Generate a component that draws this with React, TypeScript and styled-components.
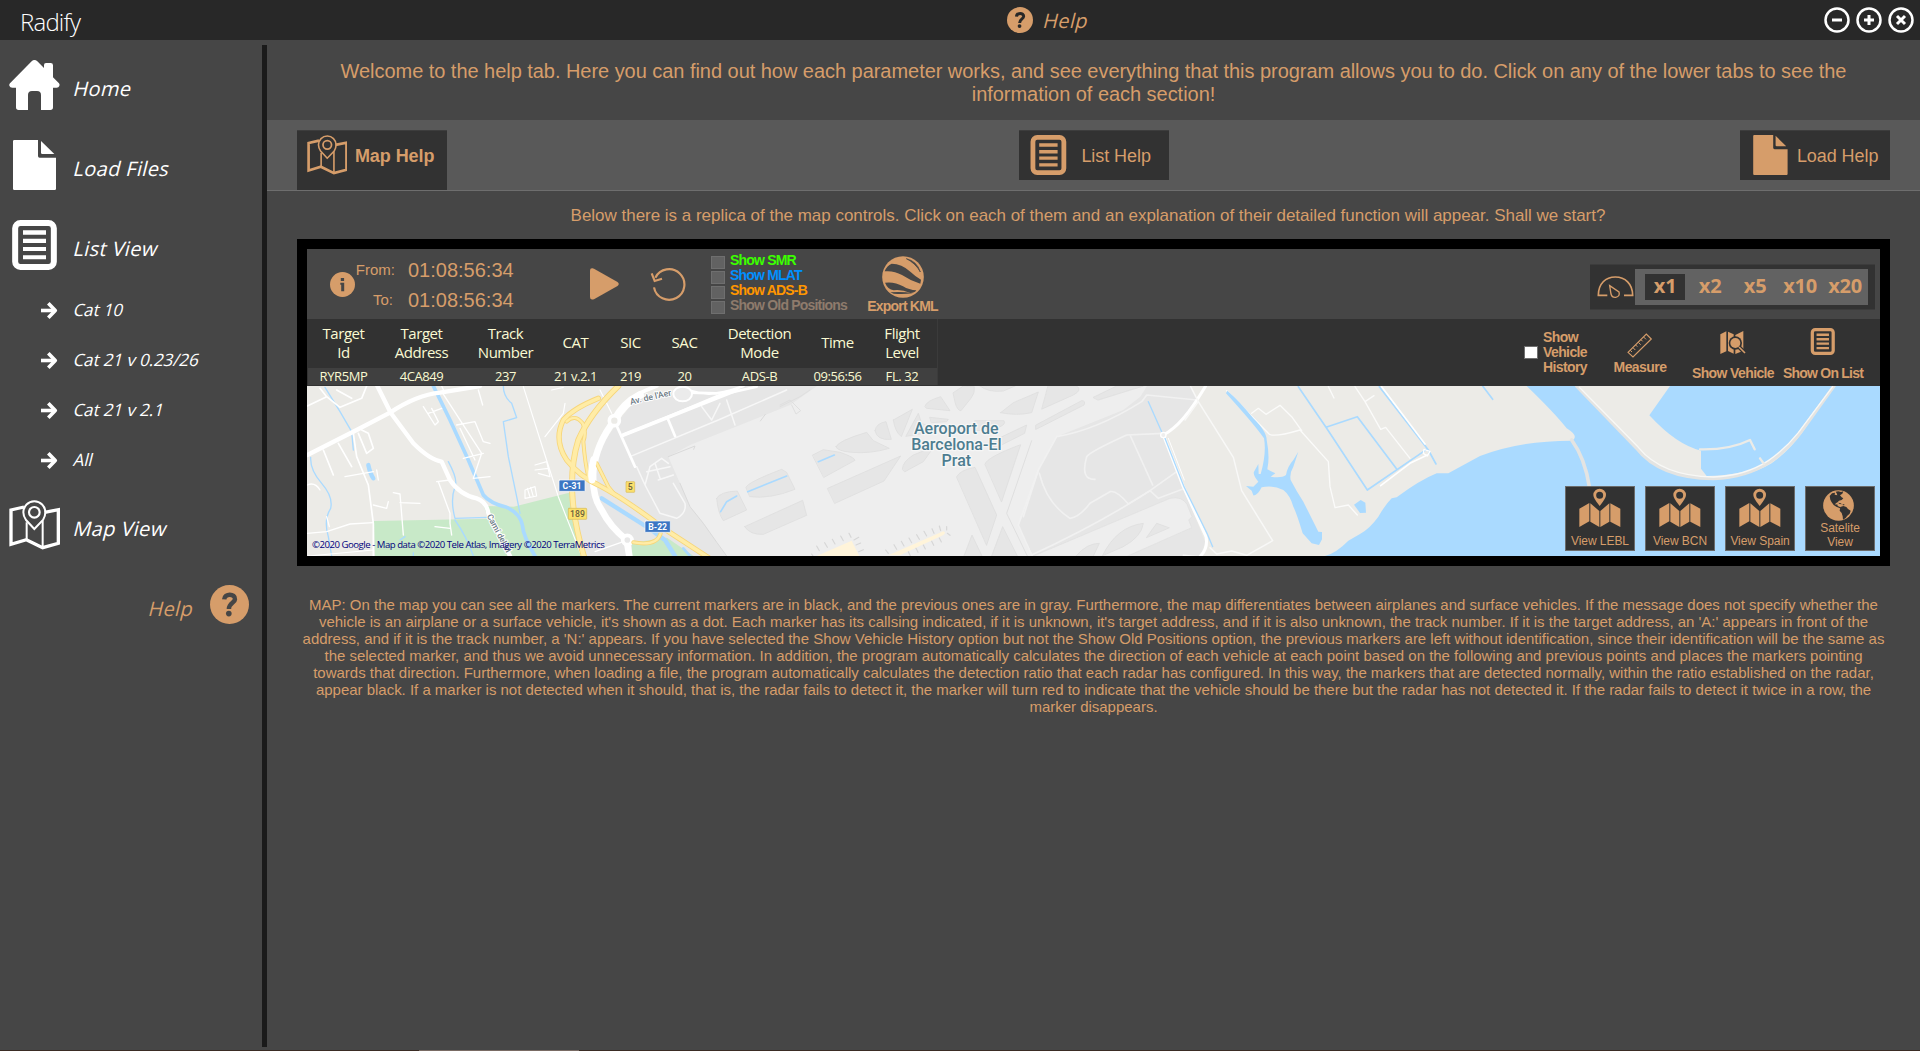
import React from "react";
import styled, { createGlobalStyle, css } from "styled-components";

const tan = "#d69d6a";
const arial = '"Liberation Sans", Arial, sans-serif';
const segoe = '"Open Sans", "Noto Sans", sans-serif';

const GlobalStyle = createGlobalStyle`
  *, *::before, *::after { box-sizing: border-box; }
  body { margin: 0; background: #464646; overflow: hidden; }
  svg { display: block; flex: none; }
`;

/* ---------- window ---------- */

const Window = styled.div`
  display: flex;
  flex-direction: column;
  width: 1920px;
  height: 1051px;
  background: #464646;
  color: ${tan};
  font-family: ${arial};
`;

const TitleBar = styled.header`
  display: grid;
  grid-template-columns: 987px auto 1fr;
  align-items: center;
  height: 40px;
  padding: 0 6px 0 20px;
  background: #282828;
`;

const AppName = styled.div`
  font: 300 24px/32px ${segoe};
  letter-spacing: -0.8px;
  color: #fff;
  padding-top: 3px;
`;

const TitleCenter = styled.div`
  display: flex;
  align-items: center;
  gap: 11px;
`;

const WindowButtons = styled.div`
  display: flex;
  justify-content: flex-end;
  gap: 6px;
`;

const Slanted = styled.span<{ $size?: number; $top?: number; $spread?: number }>`
  display: inline-block;
  font: 400 ${(p) => p.$size ?? 20}px/28px ${segoe};
  letter-spacing: ${(p) => p.$spread ?? 0.35}px;
  transform: skewX(-14deg);
  padding-top: ${(p) => p.$top ?? 0}px;
  white-space: nowrap;
`;

const Body = styled.div`
  display: flex;
  flex: 1;
  min-height: 0;
`;

const BottomEdge = styled.div`
  display: flex;
  height: 1px;
  padding-left: 419px;
  background: #3a2c24;
  &::after {
    content: "";
    width: 160px;
    background: #796b64;
  }
`;

/* ---------- sidebar ---------- */

const Sidebar = styled.nav`
  display: flex;
  flex-direction: column;
  width: 262px;
  padding-top: 20px;
  color: #fff;
`;

const NavItem = styled.a`
  display: flex;
  align-items: center;
  height: 50px;
  margin-bottom: 30px;
  padding-left: 9px;
  gap: 15px;
`;

const SubNav = styled.div`
  margin: -15px 0 15px;
`;

const SubItem = styled.a`
  display: flex;
  align-items: center;
  height: 50px;
  padding-left: 41px;
  gap: 16px;
`;

const HelpItem = styled.a`
  display: flex;
  align-items: center;
  justify-content: flex-end;
  gap: 15px;
  margin-top: 5px;
  padding-right: 13px;
  color: ${tan};
`;

const Divider = styled.div`
  width: 5px;
  margin: 5px 0 3px;
  background: #1a1a1a;
`;

/* ---------- content ---------- */

const Content = styled.main`
  flex: 1;
  display: flex;
  flex-direction: column;
`;

const Welcome = styled.p`
  margin: 0;
  height: 80px;
  padding-top: 20px;
  font-size: 20px;
  line-height: 23px;
  letter-spacing: -0.04px;
  text-align: center;
`;

const TabStrip = styled.div`
  display: flex;
  justify-content: space-between;
  align-items: flex-start;
  height: 71px;
  padding: 10px 30px 0;
  background: #595959;
  border-bottom: 1px solid #6e6e6e;
`;

const Tab = styled.button<{ $active?: boolean }>`
  display: flex;
  align-items: flex-start;
  width: 150px;
  height: ${(p) => (p.$active ? 60 : 50)}px;
  padding: 5px 5px 0 9.5px;
  border: 0;
  background: #323232;
  color: ${tan};
  font: ${(p) => (p.$active ? "bold" : "normal")} 18px/42px ${arial};
  letter-spacing: -0.06px;
  box-shadow: inset 0 1px #3d3d3d;
  span { flex: 1; text-align: center; white-space: nowrap; }
`;

const Intro = styled.p`
  margin: 0;
  height: 48px;
  padding: 15px 11px 0 0;
  font-size: 17px;
  line-height: 20px;
  letter-spacing: -0.02px;
  text-align: center;
`;

const Replica = styled.section`
  margin: 0 30px;
  border: 10px solid #000;
  height: 327px;
`;

const Toolbar = styled.div`
  display: flex;
  align-items: flex-start;
  height: 70px;
  padding: 0 5px 0 23px;
  background: #464646;
`;

const IconSlot = styled.div<{ $top: number; $left?: number }>`
  margin: ${(p) => p.$top}px 0 0 ${(p) => p.$left ?? 0}px;
`;

const Times = styled.div`
  display: grid;
  grid-template-columns: 40px 104px;
  column-gap: 13px;
  grid-auto-rows: 30px;
  margin-top: 6px;
  line-height: 30px;
  white-space: nowrap;
`;

const TimeLabel = styled.span<{ $inset?: number }>`
  font-size: 15px;
  text-align: right;
  padding-right: ${(p) => p.$inset ?? 0}px;
`;

const TimeValue = styled.span`
  font-size: 20px;
`;

const tinyBold = css`
  font: bold 14px/15px ${arial};
  letter-spacing: -0.8px;
  white-space: nowrap;
`;

const Checks = styled.div`
  margin: 4px 0 0 25px;
  width: 138px;
`;

const CheckRow = styled.label<{ $color: string }>`
  display: flex;
  gap: 5px;
  height: 15px;
  color: ${(p) => p.$color};
  ${tinyBold}
`;

const CheckBox = styled.span<{ $on?: boolean; $top: number }>`
  flex: none;
  width: 14px;
  height: 13px;
  margin-top: ${(p) => p.$top}px;
  border: 1px solid #6f6f6f;
  background: ${(p) => (p.$on ? "#fff" : "#626262")};
`;

const Tool = styled.button<{ $width: number; $top: number; $gap: number; $left?: number; $tight?: number }>`
  display: flex;
  flex-direction: column;
  align-items: center;
  width: ${(p) => p.$width}px;
  gap: ${(p) => p.$gap}px;
  margin: 0 0 0 ${(p) => p.$left ?? 0}px;
  padding: ${(p) => p.$top}px 0 0;
  border: 0;
  background: none;
  color: ${tan};
  ${tinyBold}
  letter-spacing: ${(p) => p.$tight ?? -0.8}px;
`;

const SpeedPanel = styled.div`
  display: flex;
  align-items: center;
  width: 285px;
  height: 46px;
  margin: 15px 0 0 auto;
  padding: 0 10px 0 7px;
  gap: 1px;
  background: #323232;
  border: solid #3c3c3c;
  border-width: 1px 0;
`;

const Speeds = styled.div`
  display: flex;
  align-items: center;
  height: 36px;
  flex: 1;
  padding-left: 8px;
  background: #626262;
`;

const Speed = styled.button<{ $active?: boolean }>`
  width: ${(p) => (p.$active ? 40 : 45)}px;
  margin: 0 ${(p) => (p.$active ? 2.5 : 0)}px;
  height: 26px;
  padding: 0 0 3px;
  border: 0;
  background: ${(p) => (p.$active ? "#323232" : "transparent")};
  color: ${tan};
  font: bold 20px/23px ${segoe};
  letter-spacing: -0.2px;
`;

const InfoBar = styled.div`
  display: flex;
  align-items: flex-start;
  height: 67px;
  padding: 0 12px 0 0.5px;
  background: #323232;
`;

const TargetTable = styled.div`
  display: grid;
  grid-template-columns: 72px 84px 84px 56px 54px 54px 96px 60px 69px;
  grid-template-rows: 49px 17px;
  border-right: 1px solid #3b3b3b;
  color: #fafad2;
  font-family: ${segoe};
  text-align: center;
`;

const HeadCell = styled.div`
  display: flex;
  align-items: center;
  justify-content: center;
  padding-bottom: 2px;
  font-size: 15px;
  line-height: 19px;
  letter-spacing: -0.45px;
  white-space: pre-line;
`;

const DataCell = styled.div`
  background: #404040;
  font-size: 13px;
  line-height: 17px;
  letter-spacing: -0.4px;
`;

const History = styled.label`
  display: flex;
  gap: 5px;
  margin: 11px 22px 0 auto;
  width: 64px;
  ${tinyBold}
  letter-spacing: -0.6px;
  white-space: pre-line;
`;

const MapArea = styled.div`
  position: relative;
  height: 170px;
`;

const MapCredit = styled.div`
  position: absolute;
  left: 5px;
  bottom: 5px;
  font: 9.6px/13px ${segoe};
  letter-spacing: -0.48px;
  color: #00007c;
  white-space: nowrap;
`;

const MapButtons = styled.div`
  position: absolute;
  right: 5px;
  bottom: 5px;
  display: flex;
  gap: 10px;
`;

const MapButton = styled.button`
  display: flex;
  flex-direction: column;
  align-items: center;
  width: 70px;
  height: 65px;
  padding: 1px 0 0;
  border: 1px solid #6b6b6b;
  background: #323232;
  color: ${tan};
  font: 12px/14px ${arial};
  letter-spacing: -0.06px;
  white-space: pre-line;
  span { margin-top: auto; margin-bottom: 2px; }
`;

const Explanation = styled.p`
  margin: 30px 0 0;
  font-size: 15px;
  line-height: 17px;
  letter-spacing: -0.016px;
  text-align: center;
  white-space: pre;
`;

/* ---------- icons ---------- */

const HomeIcon = () => (
  <svg width="51" height="50" viewBox="27 180 153 150" fill="currentColor">
    <path d="M103 180Q108 180 112 184L132 204V195Q132 189 138 189H152Q159 189 159 196V232L177 250Q180 254 178 258Q176 263 170 263H159V322Q159 330 151 330H123V285Q123 273 111 273H96Q84 273 84 285V330H56Q48 330 48 322V263H37Q30 263 28 257Q27 253 30 250L95 184Q99 180 103 180Z" />
  </svg>
);

const FileIcon = ({ size = 50 }: { size?: number }) => (
  <svg width={(size * 51) / 50} height={size} viewBox="27 420 153 150" fill="currentColor">
    <path d="M43 420H114V468Q114 473 119 473H168V566Q168 570 164 570H43Q39 570 39 566V424Q39 420 43 420ZM123 423L163 462H127Q123 462 123 458Z" />
  </svg>
);

const ListIcon = ({ size = 50 }: { size?: number }) => (
  <svg width={(size * 51) / 50} height={size} viewBox="27 660 153 150" fill="currentColor">
    <rect x="45.500" y="669" width="116" height="132" rx="16" fill="none" stroke="currentColor" strokeWidth="18" />
    <path d="M69 691h69v13h-69zM69 716h69v13h-69zM69 741h69v12h-69zM69 766h69v12h-69z" />
  </svg>
);

const MapPinIcon = ({ size = 50 }: { size?: number }) => (
  <svg width={(size * 51) / 50} height={size} viewBox="27 660 153 150" fill="none" stroke="currentColor" strokeWidth="7.500">
    <path d="M72 681L33 690V793L79 779L128 803L175 790V689L134 697" strokeWidth="10" />
    <path d="M80 780V727M128 803V722" strokeWidth="6" />
    <path d="M103 747L78 720Q70 709 70 697A33 33 0 0 1 136 697Q136 709 129 720Z" strokeWidth="6" />
    <circle cx="103" cy="697" r="16" strokeWidth="6.500" />
  </svg>
);

const ArrowIcon = () => (
  <svg width="17" height="17" viewBox="0 0 17 17" fill="none" stroke="currentColor" strokeWidth="3.600">
    <path d="M0 8.500H14" />
    <path d="M7.300 1.300L14.300 8.500L7.300 15.700" strokeLinejoin="round" />
  </svg>
);

const QuestionIcon = ({ size, cut }: { size: number; cut: string }) => (
  <svg width={size} height={size} viewBox="0 0 40 40">
    <circle cx="20" cy="20" r="20" fill={tan} />
    <path d="M14.600 14.800C14.800 8.200 26 8.600 25.600 14.600C25.400 18.600 19.600 18.200 19.400 24.600" fill="none" stroke={cut} strokeWidth="4.600" />
    <circle cx="19.300" cy="29.300" r="2.900" fill={cut} />
  </svg>
);

const RoundGlyph = ({ d }: { d: string }) => (
  <svg width="26" height="26" viewBox="0 0 26 26" fill="none" stroke="#fff">
    <circle cx="13" cy="13" r="11.500" strokeWidth="2.500" />
    <path d={d} strokeWidth="3" />
  </svg>
);

const InfoIcon = () => (
  <svg width="25" height="25" viewBox="0 0 25 25">
    <circle cx="12.500" cy="12.500" r="12.500" fill={tan} />
    <path d="M10.800 6h3.300v3h-3.300zM10.300 10.800h3.900v8.400h-3v-6.400h-.9z" fill="#464646" />
  </svg>
);

const PlayIcon = () => (
  <svg width="29" height="32" viewBox="0 0 29 32" fill={tan}>
    <path d="M0 2.500Q0 0 2.500 .3L4 .8L27.500 14Q30 16 27.500 18L4 31.200Q0 32.500 0 29Z" />
  </svg>
);

const ReplayIcon = () => (
  <svg width="36" height="34.670" viewBox="1170 472 108 104" fill="none" stroke={tan} strokeWidth="6.500">
    <path d="M1182 533A46 46 0 1 0 1186 504" />
    <path d="M1175 491L1184 514L1206 507" />
  </svg>
);

const EarthIcon = () => (
  <svg width="42" height="42" viewBox="605 78 126 126">
    <circle cx="668" cy="141" r="62.500" fill={tan} />
    <g fill="#464646">
      <path d="M613 124Q619 107 634 101Q664 101 690 125Q706 140 722 149L720 161Q690 152 665 135Q640 121 613 124Z" />
      <path d="M678 86Q710 93 720 126Q706 100 678 86Z" stroke="#464646" strokeWidth="2" />
      <path d="M614 158Q642 154 668 169Q686 180 708 181Q703 189 690 189Q665 178 640 181Q622 178 614 158Z" />
      <path d="M630 187Q666 184 698 190Q666 194 640 191Z" />
    </g>
  </svg>
);

const GaugeIcon = () => (
  <svg width="36.670" height="24" viewBox="350 140 110 72" fill="none" stroke={tan} strokeWidth="5">
    <path d="M381 201H354C354 166 376 146 405 146C434 146 457 166 457 201H431" />
    <path d="M388 172L416 191Q420 204 406 207Q395 208 392 197Z" strokeWidth="4" />
  </svg>
);

const RulerIcon = () => (
  <svg width="25.300" height="24.700" viewBox="442 308 76 74" fill="none" stroke={tan} strokeWidth="3.500">
    <path d="M445 366L500 311L515 326L460 380Z" />
    <path d="M452 360l5 5M460 352l7 7M468 344l5 5M476 336l7 7M484 328l5 5M492 320l7 7" strokeWidth="3" />
  </svg>
);

const MapSearchIcon = () => (
  <svg width="26" height="24.700" viewBox="722 298 78 74">
    <path d="M723 311L741 302V362L723 370ZM746 303L763 311V369L746 361ZM768 313L792 301V360L768 370Z" fill={tan} />
    <circle cx="768" cy="337" r="20" fill="#323232" />
    <circle cx="768" cy="337" r="15" fill={tan} />
    <path d="M779 349L797 367" stroke="#323232" strokeWidth="12" />
    <path d="M779 349L797 367" stroke={tan} strokeWidth="5" />
  </svg>
);

const FoldedMapIcon = () => (
  <svg width="42" height="40" viewBox="236 355 126 120" fill={tan}>
    <path d="M298 357A19 19 0 0 1 317 376Q317 386 298 409Q279 386 279 376A19 19 0 0 1 298 357ZM298 366A10.500 10.500 0 1 0 298 387A10.500 10.500 0 1 0 298 366Z" fillRule="evenodd" />
    <path d="M237 417L267 400V455L237 472ZM270 401L297 424V472L270 456ZM300 424L327 401V456L300 472ZM330 401L360 417V472L330 456Z" />
  </svg>
);

const GlobeIcon = () => (
  <svg width="31" height="31" viewBox="968 359 93 93">
    <circle cx="1014.500" cy="405.500" r="46" fill={tan} />
    <g fill="#323232">
      <path d="M988 377L995 369L1004 367L1003 373L1011 375L1009 369L1006 364L1014 363L1022 365L1029 363L1026 370L1019 375L1024 381L1029 384L1024 389L1016 391L1012 396L1006 399L1005 403L1011 402L1012 407L1019 410L1024 413L1019 414L1008 409L1000 404L994 396L990 388Z" />
      <path d="M1013 397L1021 399L1025 402L1018 401ZM1027 402H1032V405H1027Z" />
      <path d="M1020 410L1029 407L1038 410L1043 416L1051 421L1048 430L1041 436L1036 443L1028 448L1027 438L1024 428L1018 421Z" />
    </g>
  </svg>
);

/* ---------- map drawing ---------- */

const Shield = ({ x, y, w, h, text, blue }: { x: number; y: number; w: number; h: number; text: string; blue?: boolean }) => (
  <g>
    <rect x={x} y={y} width={w} height={h} rx="2" fill={blue ? "#3b76c4" : "#fbe06c"} stroke={blue ? "#fff" : "#d8ba55"} strokeWidth="2" />
    <text x={x + w / 2} y={y + h / 2 + 9} textAnchor="middle" fontFamily="Roboto, sans-serif" fontWeight={blue ? 700 : 500} fontSize="26" fill={blue ? "#fff" : "#6b623e"}>
      {text}
    </text>
  </g>
);

const MapDrawing = () => (
  <svg width="1573" height="170" viewBox="0 0 4719 510" preserveAspectRatio="none" strokeLinejoin="round" strokeLinecap="round">
    <rect width="4719" height="510" fill="#ecebe7" />

    {/* airport grounds */}
    <path d="M1180 0L990 35L935 105L880 185L855 280L800 275L796 350L835 510H2680L2695 470L2629 302L2569 147L2629 92L2674 42L2649 0Z" fill="#e6e6e6" />
    <path d="M1530 0L1449 57L1149 177L1084 212L1119 292L1149 362L1189 412L1230 470L1259 510H2179L2134 422L2194 252L2249 152L2449 72L2500 32L2520 0Z" fill="#eeeeee" />
    <path d="M2179 510L2589 337Q2625 330 2640 355L2655 392L2645 402L2654 425L2462 510Z" fill="#eeeeee" stroke="#dfdfdf" strokeWidth="2" />

    {/* aprons between taxiways */}
    <g transform="translate(1419 -48)" fill="#e6e6e6" stroke="#dfdfdf" strokeWidth="2.500">
      <path d="M435 108Q440 92 482 80L510 122L440 115Z" />
      <path d="M520 68L550 48L583 50Q586 70 572 86L543 122Q532 122 526 100Z" />
      <path d="M600 48Q625 68 670 63L705 48Z" />
      <path d="M285 182Q288 160 318 155L334 208Q290 212 285 182Z" />
      <path d="M340 150L397 118L364 200Q345 185 340 150Z" />
      <path d="M378 198L415 130L425 160Q440 170 465 168L430 190Z" />
      <path d="M450 142L505 148L500 155L455 158Z" />
      <path d="M168 230Q175 212 260 187L280 212L328 235Q270 252 215 247Q170 243 168 230Z" />
      <path d="M98 255L130 239L180 247Q224 262 225 271L132 322Z" />
      <path d="M143 355L362 258L312 333L165 400Z" />
      <path d="M367 297Q368 275 400 255L462 230L430 275L375 305Z" />
      <path d="M662 128L700 98L775 66L755 128Q710 138 662 128Z" />
      <path d="M805 48H890Q908 60 880 75L786 117Z" />
      <path d="M768 165L905 92Q918 92 912 105L768 178Z" />
      <path d="M940 82L1010 48H1090L955 90Z" />
      <path d="M620 222L740 165L734 190L650 232Z" />
      <path d="M585 152L672 152Q682 165 640 178L590 182Z" />
      <path d="M615 282Q620 262 722 224L665 395Z" />
      <path d="M530 320Q540 300 585 292L650 435L620 525Z" />
      <path d="M552 558L576 495L606 558ZM635 558L668 470L712 558Z" />
      <path d="M-102 352Q-100 338 5 298L20 307L45 358Q-30 388 -90 380Z" />
      <path d="M-190 385Q-180 365 -128 363L-100 420L-170 452Q-186 430 -190 385Z" />
      <path d="M-106 470L68 391L80 436L-50 493Q-90 495 -106 470Z" />
      <path d="M888 558Q920 520 958 520L940 558ZM968 556Q1010 470 1090 460Q1085 500 1030 530ZM1100 502L1130 460L1167 473Z" />
    </g>

    {/* airport edges and service roads */}
    <g transform="translate(1419 -48)" fill="none" stroke="#f1f1f1" strokeWidth="5">
      <path d="M1150 190L1040 195Q930 245 920 260Q900 330 945 328M1050 195L1118 345M1190 305L1110 362Q960 460 755 555L715 465L775 300L830 200Q950 180 1085 95L1100 75L1250 90" />
      <path d="M775 300L730 440M778 310Q800 400 870 445Q900 440 930 400L990 365Q1010 360 1045 402L1110 362L1135 385L1215 355" />
    </g>
    <g transform="translate(1419 -48)">
      <path d="M755 212L680 430L742 558M0 110L60 80L90 60M0 105L30 90L62 122L48 132L35 105" fill="none" stroke="#dfdfdf" strokeWidth="3" />
      <path d="M110 558L215 512L238 558ZM325 556L490 484Q500 488 490 495L360 556Z" fill="#fff4da" />
      <path d="M95 552l8 12M118 542l-8-14M142 532l-8-14M165 522l-8-14M190 512l-8-14M213 502l-6-12M222 510l14-8M228 525l14-6M236 545l14-6M325 550l-8-10M350 538l-8-14M372 528l-8-14M395 518l-8-14M418 508l-8-14M440 498l-8-14M462 490l-6-14M482 482l-4-14M500 480l0-10M502 490l8 6M385 545l6 12M408 535l6 12M430 525l6 12M455 514l6 12M478 504l6 12" stroke="#d6d6d6" strokeWidth="3.500" />
      <path d="M115 275L163 255M-178 425L-160 395L-130 378M-97 365L20 318" stroke="#aadaff" strokeWidth="5" fill="none" />
    </g>
    <path d="M1084 212L1164 180L1160 190M1360 105L1375 85M1119 292L1149 362L1189 412L1230 470L1259 510" fill="none" stroke="#dadada" strokeWidth="3" />

    {/* parks */}
    <path d="M201 405L544 398L530 360L620 362L795 318L808 420L835 510H204Z" fill="#c8e9c8" />
    <path d="M975 470L1080 455L1160 510H975Z" fill="#c8e9c8" />

    {/* canals */}
    <g transform="translate(-51 -48)" fill="none" stroke="#aadaff">
      <path d="M430 48L480 150L535 270L580 375Q600 400 650 412Q690 430 697 465Q700 500 735 558" strokeWidth="11" />
      <path d="M105 52L150 125L185 185L190 240M62 262Q60 300 95 340Q130 380 122 415Q100 450 115 500L125 558M475 275Q505 330 495 350Q480 390 495 445L590 442M640 48Q640 80 665 100L680 143L640 155L655 260L680 380L690 430M495 450Q530 500 550 558M330 510L345 500M370 548v10" strokeWidth="4" />
      <path d="M235 285Q240 310 250 325" strokeWidth="13" />
      <path d="M935 385L1085 480Q1110 500 1125 510L1155 558" strokeWidth="13" />
      <path d="M1180 535L1200 558" strokeWidth="8" />
    </g>

    {/* minor roads */}
    <g transform="translate(-51 -48)" fill="none" stroke="#fff" strokeWidth="4">
      <path d="M52 108L110 80L90 55M110 80L150 112L215 85L230 48M140 60L185 85M100 240L130 315M145 220L185 290M205 190L230 250L250 235L235 190L215 180M190 190L200 260L235 345L250 460V558" strokeWidth="5" />
      <path d="M52 345Q75 335 90 360M52 490L110 485L180 462L250 458M110 440L118 470M250 405L290 415L295 395M310 368L330 372L340 495M330 398L390 400M165 320L250 305M265 330L260 300M440 335L480 330M445 335L480 430V460L485 495M435 470L480 475M400 110L435 165L445 155L425 115M415 130L455 115M455 65L575 250L550 325L600 320M500 165L555 155L580 215L600 220M565 60L578 105M465 70L455 48M510 175L555 270M580 250L520 265" />
      <path d="M700 50L760 240L805 380L875 558M930 60L965 130M785 60L820 52M765 200L820 130L825 100M735 285L770 275L780 320L745 310M735 300L775 295M705 360L735 350L740 378L705 385ZM712 355l8 26M722 352l8 28M55 558L250 540M915 545L1000 515" strokeWidth="3.500" />
    </g>
    <g transform="translate(-51 -48)" fill="none" stroke="#f7f7f7" strokeWidth="4.500">
      <path d="M1020 260L1285 150L1490 60M1235 110L1265 150L1290 100M1310 90L1335 165M1040 290L1065 345L1110 430L1160 445Q1190 430 1185 400L1150 340M1065 345L1080 290L1115 265L1135 280M1070 305L1140 290M1105 330L1150 315M1095 280L1110 325" />
    </g>

    {/* main roads */}
    <g transform="translate(-51 -48)" fill="none" stroke="#fff">
      <path d="M52 255L200 180L300 128Q380 75 450 68L570 48M262 48L302 128L370 220Q420 270 455 275L480 330Q510 375 560 385Q590 395 595 430L660 558" strokeWidth="13" />
      <path d="M973 152Q920 220 910 300Q905 380 935 420Q960 470 1010 510L1018 558" strokeWidth="20" />
      <path d="M973 152L1035 290M1000 195L1135 140L1290 75L1400 50M1135 150L1155 198" strokeWidth="8" />
      <path d="M975 150Q1020 80 1070 60L1100 48M1000 195L1340 60" strokeWidth="12" />
      <path d="M973 152Q1000 100 1050 75" strokeWidth="24" />
      <path d="M1200 62Q1270 85 1360 48M1200 68L1280 70" strokeWidth="8" />
      <ellipse cx="1178" cy="72" rx="28" ry="22" fill="#ebebeb" strokeWidth="6" />
      <circle cx="973" cy="152" r="15" fill="#ecebe7" strokeWidth="11" />
      <circle cx="1012" cy="510" r="14" fill="#e8e8e8" strokeWidth="11" />
    </g>

    {/* motorways */}
    <g transform="translate(-51 -48)" fill="none">
      {[
        ["#f7d67a", 16, 12],
        ["#ffeca6", 11, 7],
      ].map(([stroke, wide, narrow]) => (
        <g key={stroke} stroke={stroke as string}>
          <path d="M925 85Q850 115 820 150Q790 210 830 270Q870 320 925 345Q1010 390 1120 475L1260 566" strokeWidth={wide as number} />
          <path d="M985 48Q900 130 865 210Q840 290 848 390Q855 470 882 560" strokeWidth={(wide as number) + 2} />
          <path d="M830 155Q855 130 878 160Q890 185 880 215Q885 280 895 320M920 280L955 350L975 375M1030 517Q1100 530 1112 490" strokeWidth={narrow as number} />
        </g>
      ))}
    </g>
    <path d="M855 282Q850 260 860 220" fill="none" stroke="#fff" strokeWidth="20" />

    <Shield x={756} y={282} w={78} h={34} text="C-31" blue />
    <Shield x={1014} y={405} w={76} h={34} text="B-22" blue />
    <Shield x={784} y={367} w={55} h={33} text="189" />
    <Shield x={957} y={287} w={26} h={32} text="5" />

    <g fontFamily="Roboto, sans-serif" fontWeight="500" fill="#6d7b86" stroke="#fff" strokeWidth="6" paintOrder="stroke">
      <text transform="translate(971 56) rotate(-13)" fontSize="26">Av. de l&apos;Aer</text>
      <text transform="translate(539 390) rotate(62)" fontSize="25">Camí del M</text>
    </g>

    {/* delta: tracks, lagoon and drainage */}
    <g transform="translate(2439 -48)">
      <path d="M257 48Q220 110 190 145Q160 180 130 195L190 350L258 500Q265 535 240 560" fill="none" stroke="#fff" strokeWidth="9" />
      <path d="M212 50L235 95L340 262L365 362L458 512L380 556L335 543L290 552L270 533M235 95L195 150M190 556L240 560" fill="none" stroke="#f8f8f7" strokeWidth="4.500" />
      <path d="M85 95L125 185M135 205L192 350L262 492L278 530" fill="none" stroke="#aadaff" strokeWidth="4" />
      <path d="M145 205L193 330" stroke="#fff" strokeWidth="3" />
      <circle cx="130" cy="195" r="8" fill="#eee" stroke="#fff" strokeWidth="4" />
      <path d="M320 62L445 190Q455 205 540 180L625 275L630 350L645 413L685 405L712 435M395 130L415 115L438 133L480 106L515 140L545 182M625 50L642 84M705 50L735 95L762 77M735 95L782 178L797 172L870 265" fill="none" stroke="#fbfbfa" strokeWidth="4" />
      <path d="M322 62Q360 95 400 145Q440 185 440 210Q450 260 442 298L466 310L452 320Q485 325 498 315Q502 290 520 270L535 245L520 290Q508 310 512 330Q530 365 550 395L585 465L595 485L606 486V508L597 525L575 520L548 490Q530 430 520 410Q510 375 490 360Q460 345 425 352Q412 378 400 376L395 362L378 348L400 350L415 335Q398 315 402 305L415 282L416 312L422 312Q440 250 432 205Q400 160 318 70Z" fill="#aadaff" />
      <path d="M702 404L722 390L736 398L738 428L720 429Z" fill="#aadaff" />
      <path d="M535 50L618 172L742 360L920 238M618 172L712 140L830 297M1088 48L1118 88" fill="none" stroke="#aadaff" strokeWidth="5" />
      <path d="M778 50L925 240L948 282" fill="none" stroke="#aadaff" strokeWidth="5" />
      <path d="M785 50L915 222M782 347L870 280L922 255" fill="none" stroke="#fff" strokeWidth="5" />
      <path d="M912 238l18 6l-8 14l-12-8z" fill="none" stroke="#fff" strokeWidth="4" />
    </g>

    {/* sea */}
    <g transform="translate(3579 -48)">
      <path d="M1140 48V558H-525Q-490 548 -455 512L-420 492Q-390 475 -365 440Q-345 405 -325 385L-310 382Q-240 330 -190 310H-155L-60 258Q60 212 215 212Q240 200 200 175Q165 130 80 48Z" fill="#aadaff" />
      <path d="M215 210Q255 265 268 350" fill="none" stroke="#e4e4e2" strokeWidth="11" />
      <path d="M230 48L410 235Q480 318 620 328Q740 325 815 280Q870 240 905 190L1002 48H998L870 220Q840 250 780 290Q720 315 620 318L603 296V242Q530 225 448 136L510 48Z" fill="#ecebe7" />
      <path d="M230 48L410 235Q480 325 640 326Q740 322 810 275Q860 240 900 190L1002 48" fill="none" stroke="#e4e4e2" strokeWidth="10" />
      <path d="M238 52L415 232Q485 318 640 321Q735 318 805 272Q855 238 895 188L998 50" fill="none" stroke="#f8f8f6" strokeWidth="4" />
      <path d="M600 238Q690 240 750 210L764 238M780 265L792 282" fill="none" stroke="#ecebe7" strokeWidth="7" />
    </g>

    <g fontFamily="Roboto, sans-serif" fontWeight="500" fontSize="48" fill="#4d7d90" textAnchor="middle" stroke="#f6f6f6" strokeWidth="8" paintOrder="stroke">
      <text x="1948" y="144">Aeroport de</text>
      <text x="1948" y="192">Barcelona-El</text>
      <text x="1948" y="240">Prat</text>
    </g>
  </svg>
);

/* ---------- data ---------- */

const layers = [
  ["Show SMR", "#3cff00"],
  ["Show MLAT", "#0090ff"],
  ["Show ADS-B", "#ff9600"],
  ["Show Old Positions", "#8e7b6c"],
];

const columns = [
  ["Target\nId", "RYR5MP"],
  ["Target\nAddress", "4CA849"],
  ["Track\nNumber", "237"],
  ["CAT", "21 v.2.1"],
  ["SIC", "219"],
  ["SAC", "20"],
  ["Detection\nMode", "ADS-B"],
  ["Time", "09:56:56"],
  ["Flight\nLevel", "FL. 32"],
];

const explanation = `MAP: On the map you can see all the markers. The current markers are in black, and the previous ones are in gray. Furthermore, the map differentiates between airplanes and surface vehicles. If the message does not specify whether the
vehicle is an airplane or a surface vehicle, it's shown as a dot. Each marker has its callsing indicated, if it is unknown, it's target address, and if it is also unknown, the track number. If it is the target address, an 'A:' appears in front of the
address, and if it is the track number, a 'N:' appears. If you have selected the Show Vehicle History option but not the Show Old Positions option, the previous markers are left without identification, since their identification will be the same as
the selected marker, and thus we avoid unnecessary information. In addition, the program automatically calculates the direction of each vehicle at each point based on the following and previous points and places the markers pointing
towards that direction. Furthermore, when loading a file, the program automatically calculates the detection ratio that each radar has configured. In this way, the markers that are detected normally, within the ratio established on the radar,
appear black. If a marker is not detected when it should, that is, the radar fails to detect it, the marker will turn red to indicate that the vehicle should be there but the radar has not detected it. If the radar fails to detect it twice in a row, the
marker disappears.`;

export default function App() {
  return (
    <Window>
      <GlobalStyle />
      <TitleBar>
        <AppName>Radify</AppName>
        <TitleCenter>
          <QuestionIcon size={26} cut="#282828" />
          <Slanted $top={2}>Help</Slanted>
        </TitleCenter>
        <WindowButtons>
          <RoundGlyph d="M8 13h10" />
          <RoundGlyph d="M8 13h10M13 8v10" />
          <RoundGlyph d="M9 9l8 8M17 9l-8 8" />
        </WindowButtons>
      </TitleBar>
      <Body>
        <Sidebar>
          <NavItem>
            <HomeIcon />
            <Slanted $top={8}>Home</Slanted>
          </NavItem>
          <NavItem>
            <FileIcon />
            <Slanted $top={8}>Load Files</Slanted>
          </NavItem>
          <NavItem>
            <ListIcon />
            <Slanted $top={8}>List View</Slanted>
          </NavItem>
          <SubNav>
            {["Cat 10", "Cat 21 v 0.23/26", "Cat 21 v 2.1", "All"].map((name) => (
              <SubItem key={name}>
                <ArrowIcon />
                <Slanted $size={17} $spread={-0.1}>{name}</Slanted>
              </SubItem>
            ))}
          </SubNav>
          <NavItem>
            <MapPinIcon />
            <Slanted $top={8}>Map View</Slanted>
          </NavItem>
          <HelpItem>
            <Slanted $top={9}>Help</Slanted>
            <QuestionIcon size={39} cut="#464646" />
          </HelpItem>
        </Sidebar>
        <Divider />
        <Content>
          <Welcome>
            Welcome to the help tab. Here you can find out how each parameter works, and see everything that this program allows you to do. Click on any of the lower tabs to see the
            <br />
            information of each section!
          </Welcome>
          <TabStrip>
            <Tab $active>
              <MapPinIcon size={40} />
              <span>Map Help</span>
            </Tab>
            <Tab>
              <ListIcon size={40} />
              <span>List Help</span>
            </Tab>
            <Tab>
              <FileIcon size={40} />
              <span>Load Help</span>
            </Tab>
          </TabStrip>
          <Intro>
            Below there is a replica of the map controls. Click on each of them and an explanation of their detailed function will appear. Shall we start?
          </Intro>
          <Replica>
            <Toolbar>
              <IconSlot $top={23}>
                <InfoIcon />
              </IconSlot>
              <Times>
                <TimeLabel>From:</TimeLabel>
                <TimeValue>01:08:56:34</TimeValue>
                <TimeLabel $inset={2}>To:</TimeLabel>
                <TimeValue>01:08:56:34</TimeValue>
              </Times>
              <IconSlot $top={19} $left={78}>
                <PlayIcon />
              </IconSlot>
              <IconSlot $top={18} $left={31}>
                <ReplayIcon />
              </IconSlot>
              <Checks>
                {layers.map(([name, color]) => (
                  <CheckRow key={name} $color={color}>
                    <CheckBox $top={3} />
                    {name}
                  </CheckRow>
                ))}
              </Checks>
              <Tool $width={80} $top={7} $gap={1} $left={13.500}>
                <EarthIcon />
                Export KML
              </Tool>
              <SpeedPanel>
                <GaugeIcon />
                <Speeds>
                  <Speed $active>x1</Speed>
                  <Speed>x2</Speed>
                  <Speed>x5</Speed>
                  <Speed>x10</Speed>
                  <Speed>x20</Speed>
                </Speeds>
              </SpeedPanel>
            </Toolbar>
            <InfoBar>
              <TargetTable>
                {columns.map(([head]) => (
                  <HeadCell key={head}>{head}</HeadCell>
                ))}
                {columns.map(([head, value]) => (
                  <DataCell key={head}>{value}</DataCell>
                ))}
              </TargetTable>
              <History>
                <CheckBox $on $top={16} />
                {"Show\nVehicle\nHistory"}
              </History>
              <Tool $width={60} $top={14} $gap={2.3} $tight={-0.55}>
                <RulerIcon />
                Measure
              </Tool>
              <Tool $width={90} $top={10.500} $gap={11.800} $left={18} $tight={-0.62}>
                <MapSearchIcon />
                Show Vehicle
              </Tool>
              <Tool $width={90} $top={9} $gap={11} $tight={-0.78}>
                <ListIcon size={27} />
                Show On List
              </Tool>
            </InfoBar>
            <MapArea>
              <MapDrawing />
              <MapCredit>©2020 Google - Map data ©2020 Tele Atlas, Imagery ©2020 TerraMetrics</MapCredit>
              <MapButtons>
                {["View LEBL", "View BCN", "View Spain"].map((name) => (
                  <MapButton key={name}>
                    <FoldedMapIcon />
                    <span>{name}</span>
                  </MapButton>
                ))}
                <MapButton>
                  <IconSlot $top={2} $left={-3}>
                    <GlobeIcon />
                  </IconSlot>
                  <span>{"Satelite\nView"}</span>
                </MapButton>
              </MapButtons>
            </MapArea>
          </Replica>
          <Explanation>{explanation}</Explanation>
        </Content>
      </Body>
      <BottomEdge />
    </Window>
  );
}
